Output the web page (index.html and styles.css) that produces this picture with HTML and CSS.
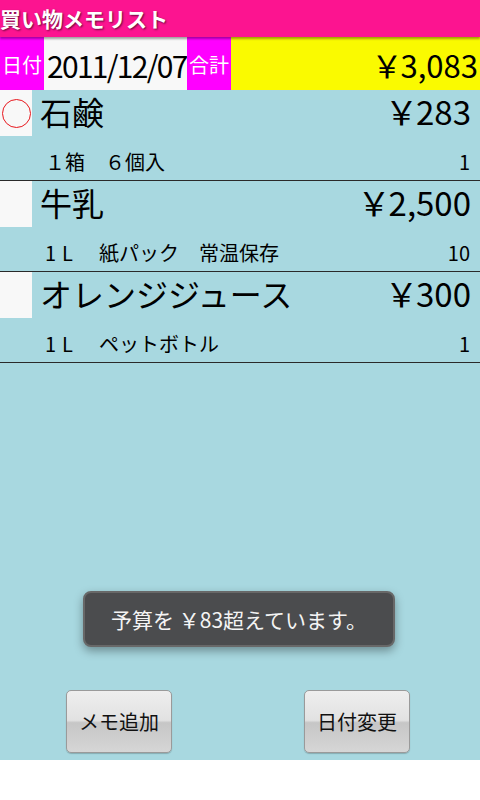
FILE: index.html
```html
<!DOCTYPE html>
<html lang="ja">
<head>
<meta charset="utf-8">
<link rel="stylesheet" href="styles.css">
</head>
<body>
<div class="app">
  <div class="titlebar">買い物メモリスト</div>
  <div class="header">
    <div class="label">日付</div>
    <div class="date">2011/12/07</div>
    <div class="label">合計</div>
    <div class="total"><span class="yen">￥</span>3,083</div>
  </div>
  <div class="list">
    <div class="item">
      <div class="row-main">
        <div class="check"><span class="circle"></span></div>
        <div class="name">石鹸</div>
        <div class="price"><span class="yen">￥</span>283</div>
      </div>
      <div class="row-sub">
        <div class="memo">１箱　６個入</div>
        <div class="qty">1</div>
      </div>
    </div>
    <div class="item">
      <div class="row-main">
        <div class="check"></div>
        <div class="name">牛乳</div>
        <div class="price"><span class="yen">￥</span>2,500</div>
      </div>
      <div class="row-sub">
        <div class="memo"><span class="unit">1L</span>　紙パック　常温保存</div>
        <div class="qty">10</div>
      </div>
    </div>
    <div class="item">
      <div class="row-main">
        <div class="check"></div>
        <div class="name">オレンジジュース</div>
        <div class="price"><span class="yen">￥</span>300</div>
      </div>
      <div class="row-sub">
        <div class="memo"><span class="unit">1L</span>　ペットボトル</div>
        <div class="qty">1</div>
      </div>
    </div>
  </div>
  <div class="buttons">
    <div class="cell"><button class="btn">メモ追加</button></div>
    <div class="cell"><button class="btn">日付変更</button></div>
  </div>
  <div class="toast">予算を ￥83超えています。</div>
</div>
</body>
</html>
```
FILE: styles.css
```css
* { box-sizing: border-box; }
html, body {
  margin: 0;
  padding: 0;
  background: #ffffff;
}
body {
  width: 480px;
  height: 800px;
  font-family: "Noto Sans CJK JP", "Noto Sans", sans-serif;
  color: #000;
}
.app {
  position: relative;
  width: 480px;
  height: 760px;
  background: #a8d8e0;
  display: flex;
  flex-direction: column;
}
.titlebar {
  height: 37px;
  background: #fc1490;
  color: #fff;
  font-size: 21px;
  font-weight: bold;
  line-height: 37px;
  text-shadow: 1px 1px 2px rgba(0,0,0,0.6);
  box-shadow: 0 2px 2px rgba(0,0,0,0.35);
  position: relative;
  z-index: 1;
}
.header {
  height: 53px;
  display: flex;
  align-items: stretch;
}
.label {
  background: #ff00ff;
  color: #fff;
  font-size: 20px;
  width: 44px;
  display: flex;
  align-items: center;
  justify-content: center;
  padding-top: 2px;
}
.date {
  width: 143px;
  background: #f8f8f8;
  font-size: 30px;
  display: flex;
  align-items: center;
  padding-left: 3px;
  padding-top: 2px;
  letter-spacing: -1.7px;
  white-space: nowrap;
  overflow: hidden;
}
.total {
  flex: 1;
  background: #fafa00;
  font-size: 31px;
  display: flex;
  align-items: center;
  justify-content: flex-end;
  padding-right: 2px;
  padding-top: 2px;
}
.yen {
  letter-spacing: -6px;
  margin-right: 4px;
}
.list {
  flex: 1;
  display: flex;
  flex-direction: column;
}
.item {
  height: 91px;
  border-bottom: 1px solid #2a2a2a;
  display: flex;
  flex-direction: column;
}
.row-main {
  height: 46px;
  display: flex;
  align-items: center;
}
.check {
  width: 32px;
  height: 46px;
  background: #f8f8f8;
  display: flex;
  align-items: center;
  justify-content: center;
}
.circle {
  width: 29px;
  height: 29px;
  border: 1.5px solid #e8161c;
  border-radius: 50%;
}
.name {
  font-size: 32px;
  margin-left: 8px;
  flex: 1;
  padding-bottom: 4px;
}
.price {
  font-size: 33px;
  padding-right: 9px;
  padding-bottom: 4px;
}
.row-sub {
  flex: 1;
  display: flex;
  align-items: center;
  padding: 6px 10px 0 45px;
  font-size: 20px;
}
.memo { flex: 1; white-space: nowrap; }
.unit {
  letter-spacing: 6px;
}
.qty { text-align: right; }
.buttons {
  height: 70px;
  display: flex;
  padding: 0 4px 7px 0;
  align-items: flex-end;
}
.cell {
  flex: 1;
  display: flex;
  justify-content: center;
}
.btn {
  width: 106px;
  height: 63px;
  border: 1px solid #9a9a9a;
  border-radius: 5px;
  background: linear-gradient(#eeeeee 0%, #e2e2e2 48%, #c6c6c6 52%, #d6d6d6 100%);
  font-family: "Noto Sans CJK JP", sans-serif;
  font-size: 20px;
  color: #111;
  padding: 0;
  box-shadow: 0 1px 1px rgba(0,0,0,0.2);
}
.toast {
  position: absolute;
  left: 83px;
  top: 591px;
  width: 312px;
  height: 56px;
  background: #4b4c4e;
  border: 2px solid #686868;
  border-radius: 8px;
  color: #f4f4f4;
  font-size: 21px;
  display: flex;
  align-items: center;
  justify-content: center;
  box-shadow: 0 4px 10px rgba(0,0,0,0.35);
}
```
